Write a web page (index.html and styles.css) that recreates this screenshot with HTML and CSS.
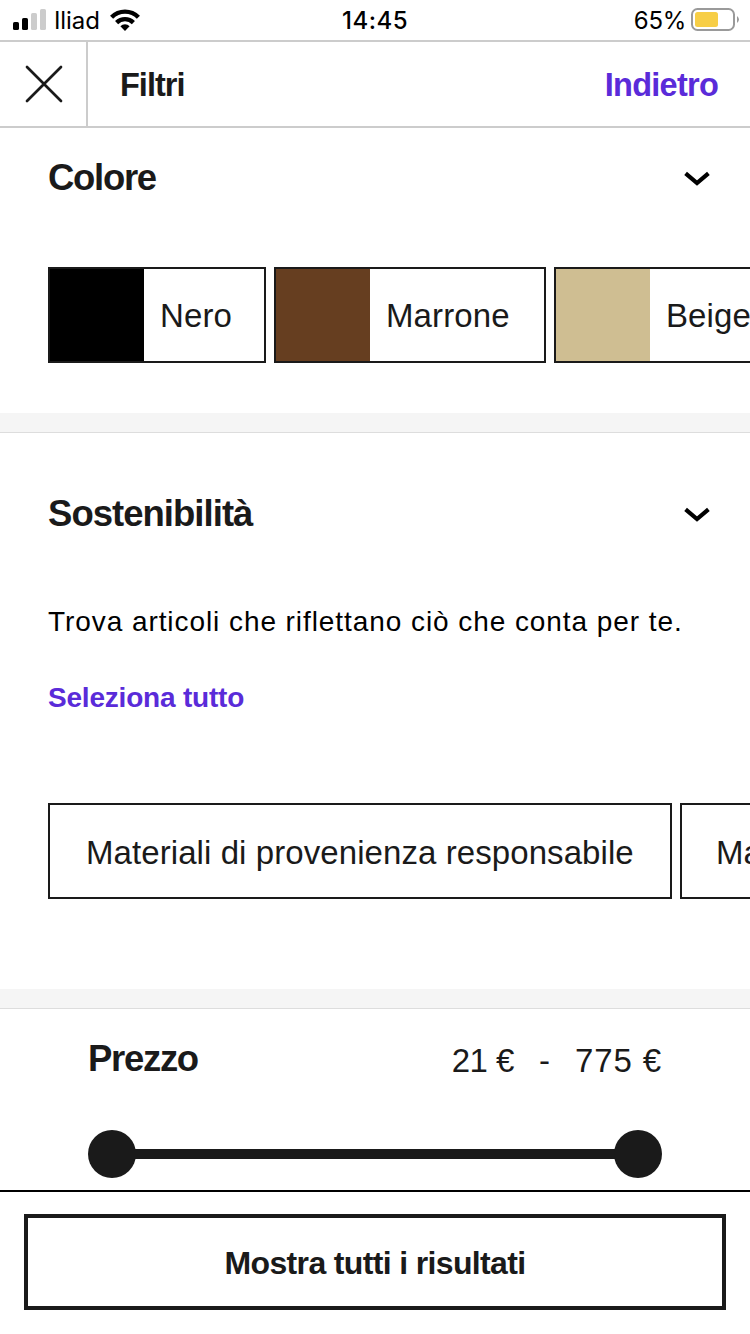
FILE: index.html
```html
<!DOCTYPE html>
<html lang="it">
<head>
<meta charset="utf-8">
<title>Filtri</title>
<link rel="stylesheet" href="styles.css">
</head>
<body>
<div class="screen">
  <div class="status">
    <div class="status-left">
      <svg class="signal" width="34" height="22" viewBox="0 0 34 22">
        <rect x="0" y="13" width="6" height="8" rx="1.6" fill="#000"/>
        <rect x="9" y="9" width="6" height="12" rx="1.6" fill="#000"/>
        <rect x="18" y="4" width="6" height="17" rx="1.6" fill="#ccc"/>
        <rect x="27" y="0" width="6" height="21" rx="1.6" fill="#ccc"/>
      </svg>
      <span class="carrier">Iliad</span>
      <svg class="wifi" width="30" height="22" viewBox="0 0 30 22">
        <g fill="none" stroke="#000" stroke-width="4.400">
          <path d="M1.600 8.200a19 19 0 0 1 26.800 0"/>
          <path d="M6.600 13.600a11.900 11.900 0 0 1 16.800 0"/>
        </g>
        <path d="M15 22l-4.600-4.800a6.300 6.300 0 0 1 9.200 0z"/>
      </svg>
    </div>
    <span class="clock">14:45</span>
    <div class="status-right">
      <span class="percent">65%</span>
      <svg class="battery" width="48" height="23" viewBox="0 0 48 23">
        <rect x="1" y="1" width="42" height="21" rx="5.500" fill="none" stroke="#9a9a9a" stroke-width="2"/>
        <rect x="4" y="4" width="23" height="15" rx="2.500" fill="#f7ce46"/>
        <path d="M46 8q4 3.500 0 7z" fill="#9a9a9a"/>
      </svg>
    </div>
  </div>

  <header class="header">
    <button class="close" aria-label="Chiudi">
      <svg width="38" height="38" viewBox="0 0 38 38"><path d="M2 2l34 34M36 2L2 36" fill="none" stroke="#1a1a1a" stroke-width="2.700" stroke-linecap="round"/></svg>
    </button>
    <h1 class="title">Filtri</h1>
    <a class="back">Indietro</a>
  </header>

  <main class="content">
    <section class="section color">
      <div class="section-head">
        <h2 class="heading">Colore</h2>
        <svg class="chevron" width="26" height="16" viewBox="0 0 26 16"><path d="M1.600 2.400L13 12 24.400 2.400" fill="none" stroke="#000" stroke-width="4.200"/></svg>
      </div>
      <div class="chips">
        <div class="swatch-chip nero"><span class="swatch black"></span><span class="swatch-label">Nero</span></div>
        <div class="swatch-chip marrone"><span class="swatch brown"></span><span class="swatch-label">Marrone</span></div>
        <div class="swatch-chip beige"><span class="swatch sand"></span><span class="swatch-label">Beige</span></div>
      </div>
    </section>
    <section class="section sustainability">
      <div class="section-head">
        <h2 class="heading wide">Sostenibilità</h2>
        <svg class="chevron" width="26" height="16" viewBox="0 0 26 16"><path d="M1.600 2.400L13 12 24.400 2.400" fill="none" stroke="#000" stroke-width="4.200"/></svg>
      </div>
      <p class="intro">Trova articoli che riflettano ciò che conta per te.</p>
      <a class="select-all">Seleziona tutto</a>
      <div class="chips">
        <div class="chip materials">Materiali di provenienza responsabile</div>
        <div class="chip">Ma</div>
      </div>
    </section>
    <section class="price">
      <div class="price-head">
        <h2 class="heading">Prezzo</h2>
        <div class="range"><span class="min">21 €</span><span class="dash">-</span><span class="max">775 €</span></div>
      </div>
      <div class="slider"><span class="knob"></span><span class="track"></span><span class="knob"></span></div>
    </section>
  </main>

  <footer class="footer">
    <button class="show-all">Mostra tutti i risultati</button>
  </footer>
</div>
</body>
</html>
```
FILE: styles.css
```css
* { box-sizing: border-box; margin: 0; padding: 0; }

body {
  background: #fff;
  color: #1a1a1a;
  font-family: "Liberation Sans", Arial, sans-serif;
}

.screen {
  width: 750px;
  height: 1334px;
  display: flex;
  flex-direction: column;
  overflow: hidden;
}

svg { display: block; flex: none; }
button { background: none; border: 0; color: inherit; font-family: inherit; }

/* Status bar */
.status {
  height: 42px;
  flex: none;
  display: grid;
  grid-template-columns: 1fr auto 1fr;
  border-bottom: 2px solid #ccc;
  padding: 0 11px 0 13px;
  color: #000;
  font: 24px/42px Inter, sans-serif;
}
.status-left, .status-right { display: flex; align-items: flex-start; }
.status-right { justify-content: flex-end; }
.signal { margin-top: 9px; }
.carrier { margin-left: 7px; letter-spacing: -0.100px; }
.wifi { margin: 9px 0 0 10px; }
.clock { font-weight: 500; letter-spacing: 0.500px; margin-right: 2px; }
.percent { margin-right: 5px; letter-spacing: -0.300px; }
.battery { margin-top: 8px; }

/* Header */
.header {
  height: 86px;
  flex: none;
  display: flex;
  align-items: center;
  border-bottom: 2px solid #ccc;
  padding-right: 32px;
}
.close {
  width: 88px;
  height: 84px;
  display: grid;
  place-items: center;
  border-right: 2px solid #ccc;
  padding-left: 1px;
}
.title, .back {
  font-size: 32.500px;
  font-weight: 700;
  line-height: 40px;
  padding-top: 1px;
}
.title { flex: 1; margin-left: 32px; letter-spacing: -1px; }
.back { color: #5a2bd9; letter-spacing: -0.750px; }

/* Sections */
.content { flex: 1; }
.section { border-bottom: 1px solid #ddd; box-shadow: inset 0 -19px #f5f5f5; }
.color { height: 305px; padding: 27px 0 0 48px; }
.sustainability { height: 576px; padding: 58px 0 0 48px; }
.section-head {
  height: 46px;
  display: flex;
  align-items: center;
  justify-content: space-between;
  padding-right: 40px;
}
.heading {
  font-size: 36.500px;
  line-height: 46px;
  font-weight: 700;
  letter-spacing: -1.300px;
}
.heading.wide { letter-spacing: -0.970px; }
.chevron { margin-top: 2px; }

.chips { display: flex; gap: 8px; overflow: hidden; font-size: 33px; }
.color .chips { margin-top: 66px; }
.swatch-chip {
  height: 96px;
  flex: none;
  display: flex;
  align-items: center;
  border: 2px solid #1a1a1a;
}
.nero { width: 218px; }
.marrone { width: 272px; }
.beige { width: 240px; }
.swatch { width: 94px; height: 92px; }
.black { background: #000; }
.brown { background: #663e20; }
.sand { background: #cfbe92; }
.swatch-label { margin-left: 16px; padding-top: 2px; letter-spacing: 0.100px; }

.intro {
  margin-top: 65px;
  color: #000;
  font-size: 28px;
  line-height: 40px;
  letter-spacing: 0.930px;
}
.select-all {
  display: block;
  margin-top: 36px;
  color: #5a2bd9;
  font-size: 28px;
  font-weight: 700;
  line-height: 40px;
  letter-spacing: -0.200px;
}
.sustainability .chips { margin-top: 85px; }
.chip {
  height: 96px;
  flex: none;
  border: 2px solid #1a1a1a;
  padding: 2px 34px 0;
  line-height: 92px;
  letter-spacing: 0.080px;
  white-space: nowrap;
}
.materials { width: 624px; padding-left: 36px; }

/* Price range */
.price { padding: 27px 88px 0; }
.price-head { display: flex; justify-content: space-between; height: 46px; }
.range { display: flex; font-size: 33px; line-height: 50px; }
.min { letter-spacing: -0.500px; }
.dash { margin: 0 25px 0 25px; }
.max { letter-spacing: 0.900px; }
.slider { display: flex; align-items: center; margin-top: 48px; }
.knob { width: 48px; height: 48px; border-radius: 50%; background: #1a1a1a; }
.track { flex: 1; height: 10px; margin: 0 -4px; background: #1a1a1a; }

/* Footer */
.footer {
  height: 144px;
  flex: none;
  border-top: 2px solid #000;
  padding: 22px 24px 0;
}
.show-all {
  width: 100%;
  height: 96px;
  border: 4px solid #1a1a1a;
  padding-top: 2px;
  font-size: 32px;
  font-weight: 700;
  letter-spacing: -0.650px;
}
```
